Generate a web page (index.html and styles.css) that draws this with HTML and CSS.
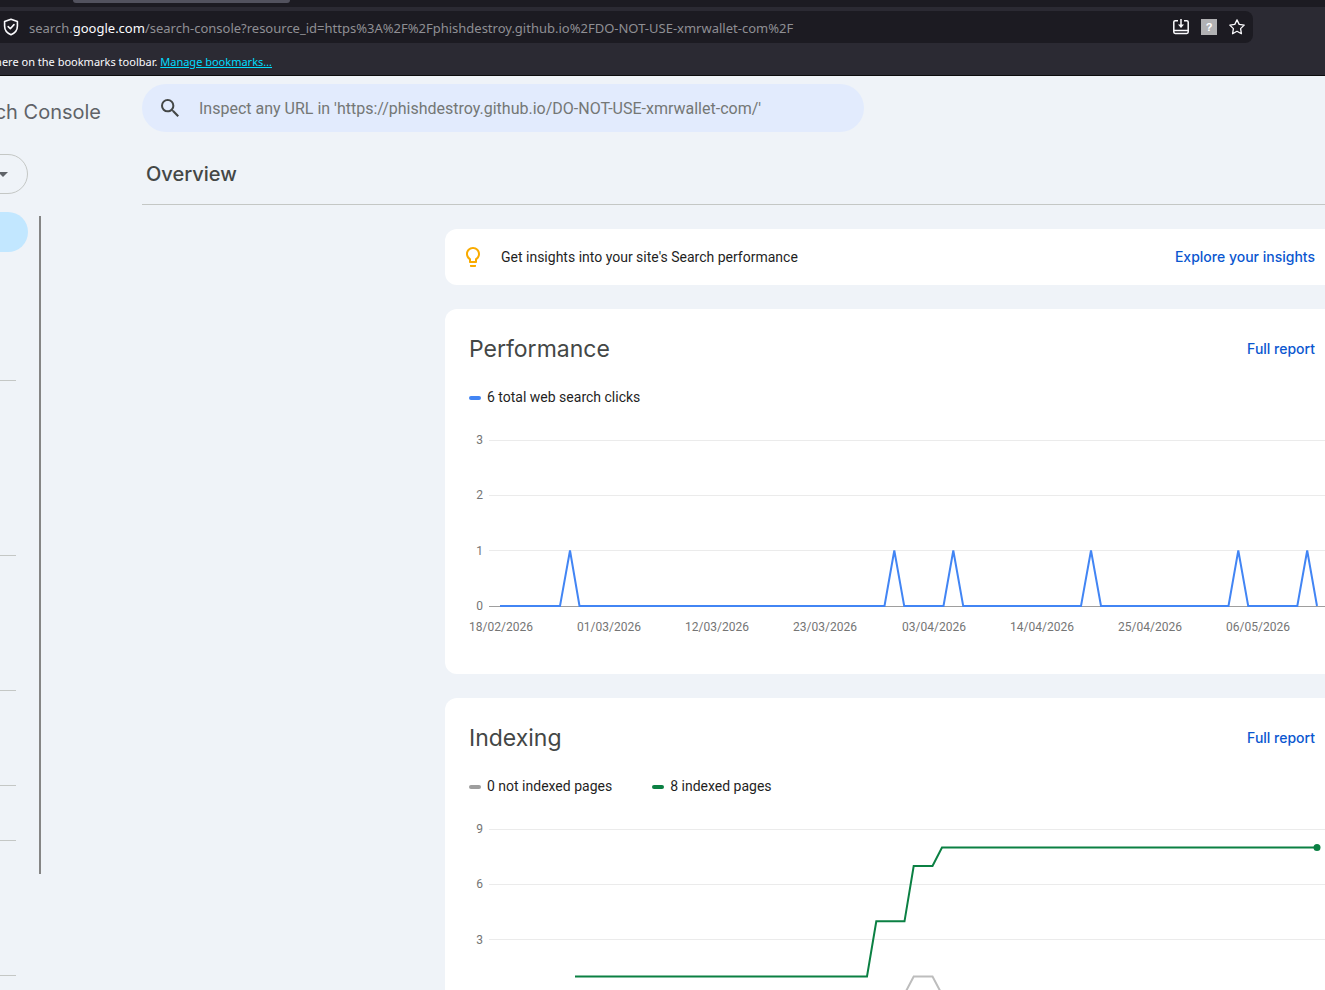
FILE: index.html
```
<!DOCTYPE html>
<html lang="en">
<head>
  <meta charset="UTF-8">
  <meta name="viewport" content="width=device-width, initial-scale=1">
  <title>Overview</title>
  <link rel="stylesheet" href="styles.css">
</head>
<body>
  <div class="browser">
    <div class="tabs"><div class="tab"></div></div>
    <div class="toolbar">
      <div class="urlbar">
        <svg class="shield" width="16" height="18" viewBox="0 0 16 18" fill="none" stroke="#fbfbfe" stroke-width="1.6" stroke-linejoin="round" stroke-linecap="round">
          <path d="M8 1.2 14.4 3.6V8c0 4-2.6 7.2-6.4 8.8C4.200 15.200 1.600 12 1.600 8V3.600z"/>
          <path d="M5.200 8.600 7.300 10.700 11 6.600"/>
        </svg>
        <div class="url" role="textbox" aria-label="Address">search.<span class="domain">google.com</span>/search-console?resource_id=https%3A%2F%2Fphishdestroy.github.io%2FDO-NOT-USE-xmrwallet-com%2F</div>
        <button class="tool" aria-label="Install">
          <svg width="16" height="16" viewBox="0 0 16 16" fill="none" stroke="#fbfbfe" stroke-width="1.500">
            <path d="M5 1.700H2.200Q.8 1.700.8 3.100V13Q.8 14.400 2.200 14.400H13.800Q15.200 14.400 15.200 13V3.100Q15.200 1.700 13.800 1.700H11M1 11.500H15"/>
            <path d="M8 0V7"/>
            <path d="M5 5.500H11L8 9z" fill="#fbfbfe" stroke="none"/>
          </svg>
        </button>
        <button class="tool unknown" aria-label="Extension">?</button>
        <button class="tool" aria-label="Bookmark this page">
          <svg width="16" height="16" viewBox="0 0 16 16" fill="none" stroke="#fbfbfe" stroke-width="1.300" stroke-linejoin="round">
            <path d="M8 .9 10.200 5.400 15.200 6.100 11.600 9.600 12.400 14.700 8 12.300 3.600 14.700 4.400 9.600.8 6.100 5.800 5.400z"/>
          </svg>
        </button>
      </div>
    </div>
    <div class="bookmarks"><span class="hint">here on the bookmarks toolbar. <a href="#">Manage bookmarks…</a></span></div>
  </div>

  <div class="app">
    <aside class="sidebar">
      <div class="logo"><span>Search Console</span></div>
      <button class="property" aria-label="Select property">
        <svg width="10" height="5" viewBox="0 0 10 5"><path d="M0 0H10L5 5z" fill="#5f6368"/></svg>
      </button>
      <div class="nav-wrap">
        <nav class="nav">
          <ul>
            <li><a class="active" href="#" aria-label="Overview"></a></li>
            <li></li><li></li><li></li>
          </ul>
          <ul><li></li><li></li><li></li><li></li></ul>
          <ul><li></li><li></li><li></li></ul>
          <ul><li></li><li></li></ul>
          <ul><li></li></ul>
          <ul><li></li><li></li><li></li></ul>
        </nav>
        <div class="scrollbar"></div>
      </div>
    </aside>

    <main class="main">
      <label class="search">
        <svg width="18" height="18" viewBox="3 3 17.500 17.500" fill="#444746"><path d="M15.500 14h-.79l-.28-.27A6.471 6.471 0 0 0 16 9.500 6.500 6.500 0 1 0 9.500 16c1.610 0 3.090-.59 4.230-1.570l.27.28v.79l5 4.990L20.490 19l-4.990-5zm-6 0C7.010 14 5 11.990 5 9.500S7.010 5 9.500 5 14 7.010 14 9.500 11.990 14 9.500 14z"/></svg>
        <input type="text" aria-label="Inspect URL" placeholder="Inspect any URL in 'https://phishdestroy.github.io/DO-NOT-USE-xmrwallet-com/'">
      </label>
      <h1>Overview</h1>

      <div class="cards">
        <section class="card insights">
          <svg width="24" height="24" viewBox="0 0 24 24" fill="#f9ab00"><path d="M9 21c0 .55.450 1 1 1h4c.55 0 1-.45 1-1v-1H9v1zm3-19C8.140 2 5 5.140 5 9c0 2.380 1.190 4.470 3 5.740V17c0 .55.450 1 1 1h6c.55 0 1-.45 1-1v-2.260c1.810-1.270 3-3.360 3-5.740 0-3.860-3.140-7-7-7zm2.850 11.100l-.85.6V16h-4v-2.300l-.85-.6A4.997 4.997 0 0 1 7 9c0-2.760 2.240-5 5-5s5 2.240 5 5c0 1.630-.8 3.160-2.150 4.100z"/></svg>
          <p>Get insights into your site's Search performance</p>
          <a class="link" href="#">Explore your insights</a>
        </section>

        <section class="card report">
          <header>
            <h2>Performance</h2>
            <a class="link" href="#">Full report</a>
          </header>
          <div class="legend">
            <span class="blue">6 total web search clicks</span>
          </div>
          <svg class="chart" viewBox="0 0 856 226">
            <path class="grid" d="M20 16.500H856M20 71.500H856M20 126.500H856"/>
            <path class="axis" d="M20 182.500H856"/>
            <g class="y-labels">
              <text x="14" y="20">3</text>
              <text x="14" y="75">2</text>
              <text x="14" y="131">1</text>
              <text x="14" y="186">0</text>
            </g>
            <g class="x-labels">
              <text x="32" y="207">18/02/2026</text>
              <text x="140" y="207">01/03/2026</text>
              <text x="248" y="207">12/03/2026</text>
              <text x="356" y="207">23/03/2026</text>
              <text x="465" y="207">03/04/2026</text>
              <text x="573" y="207">14/04/2026</text>
              <text x="681" y="207">25/04/2026</text>
              <text x="789" y="207">06/05/2026</text>
            </g>
            <polyline class="line blue-line" points="31,182 91,182 101,126.500 110.500,182 415.500,182 425.300,126.500 435.200,182 474.500,182 484.300,126.500 494.200,182 612,182 622,126.500 632,182 759.500,182 769.300,126.500 779.200,182 828.300,182 838.200,126.500 848,182"/>
          </svg>
        </section>

        <section class="card report">
          <header>
            <h2>Indexing</h2>
            <a class="link" href="#">Full report</a>
          </header>
          <div class="legend">
            <span class="grey">0 not indexed pages</span>
            <span class="green">8 indexed pages</span>
          </div>
          <svg class="chart" viewBox="0 0 856 226">
            <path class="grid" d="M20 16.500H856M20 71.500H856M20 126.500H856"/>
            <path class="axis" d="M20 182.500H856"/>
            <g class="y-labels">
              <text x="14" y="20">9</text>
              <text x="14" y="75">6</text>
              <text x="14" y="131">3</text>
            </g>
            <polyline class="line grey-line" points="106,182 435,182 444.700,163.500 463.500,163.500 473.300,182 848,182"/>
            <polyline class="line green-line" points="106,163.500 398,163.500 407.300,108.300 435.500,108.300 444.700,53 463.500,53 473,34.500 848,34.500"/>
            <circle cx="848" cy="34.500" r="3.500" fill="#0b8043"/>
          </svg>
        </section>
      </div>
    </main>
  </div>
</body>
</html>
```
FILE: styles.css
```
* {
  box-sizing: border-box;
}
body {
  margin: 0;
  height: 100vh;
  overflow: hidden;
  background: #eff3f8;
  color: #1f1f1f;
  font: 14px/20px Roboto, sans-serif;
}
button {
  border: 0;
  padding: 0;
  background: none;
  cursor: pointer;
}
svg {
  display: block;
  flex: none;
}

/* browser chrome */
.browser {
  background: #2b2a33;
  border-bottom: 1px solid #0c0c0d;
  color: #fbfbfe;
  font-family: "Noto Sans", sans-serif;
}
.tabs {
  height: 7px;
  background: #1c1b22;
  padding-left: 73px;
}
.tab {
  width: 217px;
  height: 3px;
  background: #52525e;
  border-radius: 0 0 4px 4px;
}
.toolbar {
  padding: 4px 72px 0 0;
}
.urlbar {
  display: flex;
  align-items: center;
  gap: 12px;
  height: 32px;
  padding: 0 8px 0 3px;
  background: #1c1b22;
  border-radius: 0 8px 8px 0;
}
.url {
  flex: 1;
  margin-left: -2px;
  padding-top: 2px;
  color: #8f8f94;
  font-size: 13px;
  white-space: nowrap;
}
.domain {
  color: #fbfbfe;
}
.tool {
  width: 16px;
  height: 16px;
}
.unknown {
  background: #b1b1b3;
  color: #fff;
  font: bold 11px/16px "Liberation Sans", sans-serif;
}
.bookmarks {
  display: flex;
  justify-content: flex-end;
  align-items: center;
  width: 272px;
  height: 32px;
  padding-top: 6px;
  font-size: 11px;
  white-space: nowrap;
}
.bookmarks a {
  color: #00ddff;
}

/* page */
.app {
  display: grid;
  grid-template-columns: 142px 1fr;
}
.sidebar {
  overflow: hidden;
}
.logo {
  display: flex;
  justify-content: flex-end;
  width: 101px;
  height: 78px;
  padding-top: 20px;
  color: #5f6368;
  font: 20px/32px Inter, sans-serif;
  white-space: nowrap;
}
.property {
  display: flex;
  align-items: center;
  justify-content: flex-end;
  width: 68px;
  height: 40px;
  margin-left: -40px;
  padding-right: 19px;
  border: 1px solid #c4c7c5;
  border-radius: 20px;
}
.nav-wrap {
  display: flex;
  gap: 11px;
  margin-top: 18px;
}
.nav {
  width: 28px;
}
.nav ul {
  width: 16px;
  margin: 0;
  padding: 6px 0 8px;
  border-bottom: 1px solid #c4c7c5;
  list-style: none;
}
.nav ul:first-child {
  padding-top: 0;
}
.nav li {
  height: 40px;
}
.active {
  display: block;
  width: 28px;
  height: 40px;
  background: #c2e7ff;
  border-radius: 0 20px 20px 0;
}
.scrollbar {
  width: 2px;
  height: 658px;
  margin-top: 4px;
  background: #858585;
}
.main {
  min-width: 0;
  padding-top: 8px;
}
.search {
  display: flex;
  align-items: center;
  gap: 20px;
  width: 61%;
  height: 48px;
  padding: 0 19px;
  background: #e2ebfd;
  border-radius: 24px;
}
.search input {
  flex: 1;
  border: 0;
  padding: 2px 0 0;
  outline: 0;
  background: none;
  font: 16px/24px Roboto, sans-serif;
}
.search input::placeholder {
  color: #747775;
  opacity: 1;
}
h1 {
  margin: 0;
  padding: 28px 4px 16px;
  border-bottom: 1px solid #c4c7c5;
  color: #444746;
  font: 500 20px/28px Inter, sans-serif;
}
.cards {
  display: grid;
  gap: 24px;
  margin: 24px 0 0 303px;
}
.card {
  background: #fff;
  border-radius: 12px 0 0 12px;
}
.insights {
  display: flex;
  align-items: center;
  gap: 16px;
  height: 56px;
  padding: 0 10px 0 16px;
}
.insights p {
  flex: 1;
  margin: 0;
}
.link {
  color: #0b57d0;
  font: 500 14px/20px Inter, sans-serif;
  text-decoration: none;
}
.report {
  padding: 24px 0 24px 24px;
}
.report header {
  display: flex;
  justify-content: space-between;
  align-items: center;
  padding-right: 10px;
}
h2 {
  margin: 0;
  color: #444746;
  font: 23px/32px Inter, sans-serif;
}
.legend {
  display: flex;
  gap: 40px;
  padding: 22px 0 17px;
}
.legend span {
  display: flex;
  align-items: center;
  gap: 6px;
}
.legend span::before {
  content: "";
  width: 12px;
  height: 4px;
  margin-top: 2px;
  border-radius: 2px;
}
.blue::before {
  background: #4285f4;
}
.grey::before {
  background: #9e9e9e;
}
.green::before {
  background: #0b8043;
}
.chart {
  width: 100%;
}
.chart text {
  fill: #757575;
  font-size: 12px;
}
.y-labels {
  text-anchor: end;
}
.x-labels {
  text-anchor: middle;
}
.grid {
  stroke: #ebebeb;
}
.axis {
  stroke: #9e9e9e;
}
.line {
  fill: none;
  stroke-width: 2;
}
.blue-line {
  stroke: #4285f4;
}
.grey-line {
  stroke: #bdbdbd;
}
.green-line {
  stroke: #0b8043;
}
```
